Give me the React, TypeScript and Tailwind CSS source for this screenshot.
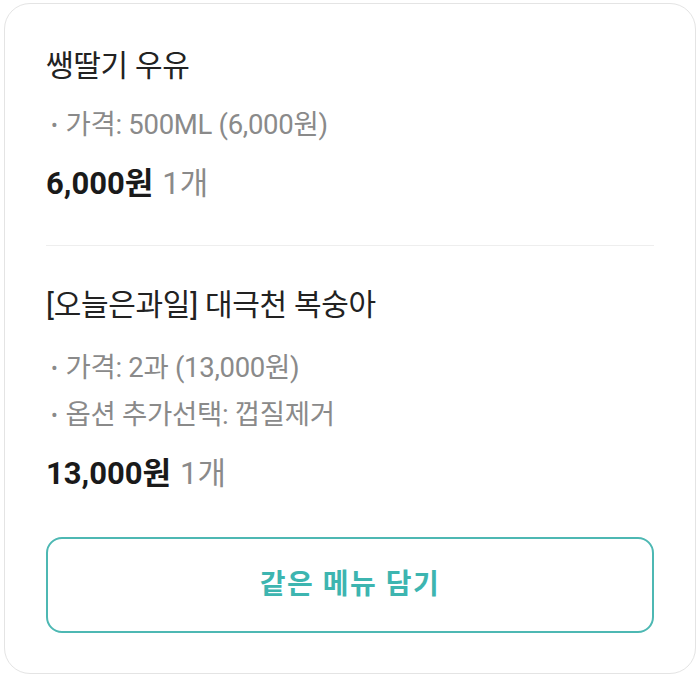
const font = { fontFamily: "Roboto, 'Noto Sans CJK KR', sans-serif" }

interface CartItem {
  name: string
  options: string[]
  price: string
  qty: string
}

const items: CartItem[] = [
  { name: '쌩딸기 우유', options: ['가격: 500ML (6,000원)'], price: '6,000원', qty: '1개' },
  {
    name: '[오늘은과일] 대극천 복숭아',
    options: ['가격: 2과 (13,000원)', '옵션 추가선택: 껍질제거'],
    price: '13,000원',
    qty: '1개',
  },
]

function ItemBlock({ item, gap }: { item: CartItem; gap: string }) {
  return (
    <div>
      <p className="text-[30px] leading-[36px] tracking-[-0.3px] text-[#222222]">{item.name}</p>
      <div className={`${gap} flex flex-col gap-[15px]`}>
        {item.options.map(opt => (
          <p key={opt} className="flex items-center text-[27.5px] leading-[32px] tracking-[-0.3px] text-[#8a8a8a]">
            <span className="ml-[5px] mr-[8px] text-[20px]">•</span>
            {opt}
          </p>
        ))}
      </div>
      <p className="mt-[25px] text-[31px] leading-[36px]">
        <span className="font-bold text-[#1a1a1a]">{item.price}</span>
        <span className="ml-[9px] text-[#8a8a8a]">{item.qty}</span>
      </p>
    </div>
  )
}

export default function App() {
  return (
    <div className="w-[700px] h-[680px] bg-white pt-[3px] pl-[4px]" style={font}>
      <div className="w-[692px] h-[671px] rounded-[26px] border border-[#e4e4e4] bg-white px-[41px] pt-[44px] pb-[40px] flex flex-col">
        <ItemBlock item={items[0]} gap="mt-[25px]" />
        <div className="mt-[43px] mb-[41px] h-px bg-[#eeeeee]" />
        <ItemBlock item={items[1]} gap="mt-[29px]" />
        <button className="mt-[45px] h-[96px] w-full rounded-[16px] border-2 border-[#4db8b3] bg-white text-[28px] font-bold tracking-[1.5px] text-[#3db5b0]">
          같은 메뉴 담기
        </button>
      </div>
    </div>
  )
}
